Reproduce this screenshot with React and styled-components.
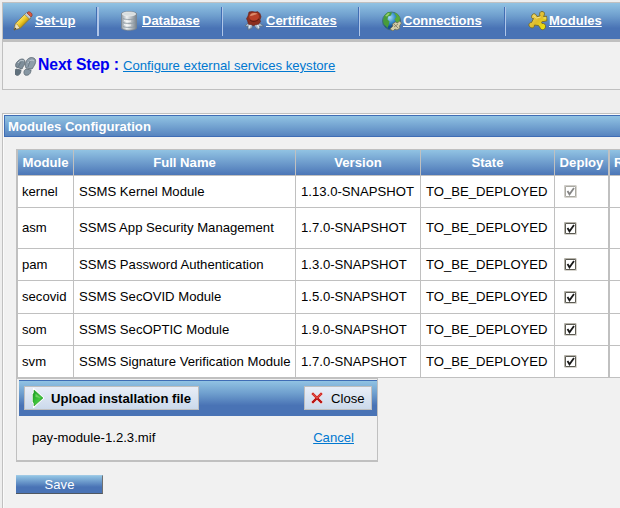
import React from "react";
import styled, { createGlobalStyle, css } from "styled-components";

const GlobalStyle = createGlobalStyle`
  * { box-sizing: border-box; }
  html, body { margin: 0; overflow: hidden; }
  body {
    background: #eeeeee;
    font-family: "Liberation Sans", Arial, sans-serif;
    font-size: 13.13px;
    line-height: 16px;
    color: #000;
  }
`;

const barGradient = "linear-gradient(#91c3e3 0%, #6f9fce 35%, #4973b5 70%, #4973b5 100%)";
const headGradient = "linear-gradient(#91c3e3, #4973b5)";

const Page = styled.div`
  width: 624px;
  height: 508px;
  padding: 2px 0 0 2px;
  overflow: hidden;
`;

const Nav = styled.nav`
  display: flex;
  height: 40px;
  border: solid #c0c0c0;
  border-width: 1px 0 3px 1px;
  background: ${barGradient};
  padding-top: 4px;
`;

const NavItem = styled.div`
  display: flex;
  flex: none;
  width: ${(p) => p.$width}px;
  height: 29px;
  padding-left: ${(p) => p.$indent}px;
  border-right: ${(p) => (p.$last ? "0" : `${p.$rule}px solid #b0c6e8`)};
  box-shadow: ${(p) => (p.$last ? "none" : "inset -1px 0 #416eb4")};
`;

const NavIcon = styled.svg`
  flex: none;
  width: 20px;
  height: 20px;
  margin-top: 4px;
`;

const NavLink = styled.a`
  margin: 6px 0 0 ${(p) => p.$gap}px;
  color: #fff;
  font-size: 13px;
  font-weight: bold;
  text-decoration: underline;
  white-space: nowrap;
`;

const NextStep = styled.section`
  display: flex;
  height: 48px;
  padding: 15px 0 0 12px;
  border: solid #c0c0c0;
  border-width: 0 0 1px 1px;
  background: #f1f1f1;
`;

const StepsIcon = styled.svg`
  width: 22px;
  height: 20px;
  margin-right: 1px;
`;

const StepLabel = styled.span`
  width: 85px;
  margin-top: -1px;
  color: #0000f0;
  font-size: 15.75px;
  letter-spacing: -0.12px;
  line-height: 18px;
  font-weight: bold;
  white-space: nowrap;
`;

const Link = styled.a`
  color: #0078d0;
  text-decoration: underline;
  white-space: nowrap;
`;

const StepLink = styled(Link)`
  padding-top: 1px;
`;

const Config = styled.section`
  height: 400px;
  margin-top: 23px;
  padding: 1px 0 0 1px;
  border: solid #c0c0c0;
  border-width: 1px 0 0 1px;
  background: #f1f1f1;
  box-shadow: inset 1px 1px #fafafa;
`;

const ConfigTitle = styled.h2`
  height: 22px;
  margin: 0;
  padding-left: 3px;
  border: 1px solid #3f6db5;
  background: linear-gradient(#91c3e3, #5784bf);
  color: #fff;
  font-size: 13.13px;
  line-height: 22px;
`;

const Body = styled.div`
  padding: 12px 0 0 12px;
`;

const Table = styled.div`
  width: 720px;
  border: solid #c0c0c0;
  border-width: 1px 0 0 2px;
`;

const Row = styled.div`
  display: grid;
  grid-template-columns: 56px 222px 125px 134px 55px 1fr;
  height: ${(p) => p.$height}px;
  background: ${(p) => (p.$head ? headGradient : "#fff")};
`;

const Cell = styled.div`
  display: flex;
  align-items: center;
  justify-content: ${(p) => (p.$head ? "center" : "flex-start")};
  padding-left: ${(p) => p.$pad ?? 5}px;
  border: solid #c0c0c0;
  border-width: 0 ${(p) => p.$rule ?? 1}px 1px 0;
  white-space: nowrap;
  ${(p) =>
    p.$head &&
    css`
      padding-left: 0;
      color: #fff;
      font-weight: bold;
    `}
`;

const LastCell = styled(Cell)`
  justify-content: flex-start;
  padding-left: 4px;
  border-right: 0;
`;

const CheckBox = styled.svg`
  width: 13px;
  height: 13px;
  margin-left: 4px;
`;

const Upload = styled.section`
  width: 362px;
  height: 84px;
  padding: 1px 0 0 2px;
  border: solid #c0c0c0;
  border-width: 1px 1px 2px 1px;
`;

const UploadBar = styled.div`
  display: flex;
  justify-content: space-between;
  height: 36px;
  padding: 5px 5px 0;
  border-top: 1px solid #3f6db5;
  background: ${barGradient};
`;

const BarButton = styled.button`
  display: flex;
  align-items: center;
  width: ${(p) => p.$width}px;
  height: 24px;
  padding: 0 0 0 ${(p) => p.$indent}px;
  border: 1px solid #bebebe;
  background: linear-gradient(#e9eef7, #cbd9eb);
  color: #000;
  font: ${(p) => (p.$strong ? "bold" : "normal")} 13.13px "Liberation Sans", Arial, sans-serif;
  white-space: nowrap;
  svg { flex: none; margin-right: ${(p) => p.$gap}px; }
`;

const FileRow = styled.div`
  display: flex;
  justify-content: space-between;
  padding: 14px 23px 0 13px;
`;

const SaveButton = styled.button`
  display: block;
  width: 87px;
  height: 19px;
  margin-top: 13px;
  padding: 0 0 0 1px;
  border: solid;
  border-width: 1px 1px 1px 0;
  border-color: #9fc9e5 #707070 #505860 #9fc9e5;
  background: linear-gradient(#91c3e3, #4973b5 65%);
  color: #fff;
  font: 13px/16px "Liberation Sans", Arial, sans-serif;
  letter-spacing: 0.15px;
`;

const Pencil = () => (
  <NavIcon viewBox="0 0 20 20">
    <defs>
      <linearGradient id="pencilBody" x1="0" y1="0" x2="1" y2="1">
        <stop offset=".25" stopColor="#fff29a" />
        <stop offset=".5" stopColor="#ecc823" />
        <stop offset=".75" stopColor="#946c0b" />
      </linearGradient>
    </defs>
    <path d="M1 19 2.5 12.5 12.5 2.5 17.5 7 7.5 17Z" fill="url(#pencilBody)" stroke="#8b7426" strokeWidth=".7" />
    <path d="M1 19 2.5 12.5 4.5 13.5 6 16 7 17Z" fill="#efe2b9" stroke="#715a25" strokeWidth=".4" />
    <path d="M1 19 2 16.5 3.5 18Z" fill="#333" />
    <path d="m11.5 3.5 2-2 5 4-2 2.500Z" fill="#c3cbd0" stroke="#596670" strokeWidth=".5" />
    <path d="m14 2 1-1c1-1 5 1 4 4l-1 1Z" fill="#d95a41" stroke="#833422" strokeWidth=".6" />
  </NavIcon>
);

const Cylinder = () => (
  <NavIcon viewBox="0 0 20 20">
    <defs>
      <linearGradient id="cylinder">
        <stop stopColor="#929ca5" />
        <stop offset=".35" stopColor="#eef1f2" />
        <stop offset="1" stopColor="#78838d" />
      </linearGradient>
    </defs>
    <path d="M1.500 2.500C2 0 16 0 16.500 2.500v14.500c0 3-15 3-15 0Z" fill="url(#cylinder)" stroke="#7d858b" strokeWidth=".8" />
    <ellipse cx="9" cy="3" rx="6.8" ry="2" fill="#d8dedf" stroke="#f3f5f5" strokeWidth=".5" />
    <path d="M3 7.500c2 1.300 10 1.300 12 0M3 11.500c2 1.300 10 1.300 12 0M3 15.500c2 1.300 10 1.300 12 0" fill="none" stroke="#8c989f" strokeWidth=".8" />
    <path d="M4 9.500c2 1 6 1 7 .5M4 13.500c2 1 6 1 7 .5" fill="none" stroke="#fff" strokeWidth=".8" />
  </NavIcon>
);

const Seal = () => (
  <NavIcon viewBox="0 0 20 20">
    <path d="m5 11-4 4 3 .5L4 19l4-2 1-4 3 4 3 2 .5-3.5 4-.5-5-4Z" fill="#a4b9ce" stroke="#596b7d" strokeWidth=".7" />
    <path d="m7 12-2 5m8-4 2 4" stroke="#e4edf4" strokeWidth="1.2" />
    <path d="m5 1 3-.5 3 .5 3-.3 2 2 1 3-1 3 .5 2-2 2.500-3 .5-2 1-2-1-3-.5-1-3.500-1-2L4 5Z" fill="#8b2f1f" stroke="#651f17" strokeWidth=".6" />
    <ellipse cx="10" cy="5.6" rx="5" ry="4" fill="#b94129" />
    <path d="M6 5c0-3 5-4 8-2-3 0-4 2-8 2Z" fill="#dc8c6b" />
    <path d="M6 9c2 2 6 2 9-1" fill="none" stroke="#601b13" />
  </NavIcon>
);

const Globe = () => (
  <NavIcon viewBox="0 0 20 20">
    <defs>
      <radialGradient id="ocean" cx=".4" cy=".3">
        <stop stopColor="#acdcf5" />
        <stop offset=".65" stopColor="#3089c9" />
        <stop offset="1" stopColor="#17508d" />
      </radialGradient>
    </defs>
    <circle cx="9.5" cy="10" r="9" fill="url(#ocean)" stroke="#3f6b70" strokeWidth=".8" />
    <path d="m2 5 4-4 4 .5-1 3-3 1-.5 3 2 2-1 4-1 2.500-4-4L1 9Z" fill="#479b39" />
    <path d="m12 2 3 .5 3 4-.5 6-3-1-2-3 2-3Z" fill="#57a83b" />
    <path d="m3 5 3-3 2 .5-3 3Z" fill="#96cf69" />
    <path d="m8 18 3-3-.5-2 3-2 2 1 2-2 2 2-2 3 .5 2-3 2-2-1-2 2Z" fill="#d2cda9" stroke="#6d694f" strokeWidth=".7" />
    <path d="m12 13 4 4m-4-1 4-3" stroke="#7d795e" strokeWidth=".8" />
  </NavIcon>
);

const Puzzle = () => (
  <NavIcon viewBox="0 0 20 20">
    <defs>
      <linearGradient id="puzzle" x1="0" y1="0" x2="1" y2="1">
        <stop stopColor="#f2dc76" />
        <stop offset=".5" stopColor="#dfbd2b" />
        <stop offset="1" stopColor="#eeee00" />
      </linearGradient>
    </defs>
    <path d="M4 4C6 1.500 8 3 9 5.500L12 5C11 2 12 .5 14 .5c3 0 3 3 1.500 5l3-.3.5 4.500-3 .8c-2-.3-3 .5-2 2 2-.5 4 1 3.500 3.500-.5 3-4 3.500-5 1.500l-2-3-4-.5c0 3-3 4-5 1.500-1.500-2 0-4 2-4l2-4C3.500 8 3 6 4 4Z" fill="url(#puzzle)" stroke="#756927" strokeWidth=".9" />
    <path d="m5.500 4.500 3 2.500 4-1m3 1h3" fill="none" stroke="#f5e58e" strokeWidth=".9" />
  </NavIcon>
);

const Footprints = () => (
  <StepsIcon viewBox="0 0 22 20">
    <g stroke="#5c6872" strokeWidth=".8">
      <path d="M2 5C5 1 10 1 10 5c0 3-2 4-3 7L1 10C0 8 1 6 2 5Z" fill="#7e8e9a" />
      <path d="m1 12 5 1c0 5-4 7-6 4-.5-2 0-4 1-5Z" fill="#60717d" />
      <path d="M11 5c1-4 6-6 9-3 2 3-1 7-3 10l-6-1c-1-2-1-4 0-6Z" fill="#8f9eaa" />
      <path d="m11 12 5 1c0 4-3 6-6 5-2-2-1-5 1-6Z" fill="#8797a3" />
    </g>
    <path d="M3 6c2-3 4-3 6-2M13 6c1-2 4-4 6-2" fill="none" stroke="#c5cfd5" />
    <path d="m6 5-3 5m12-6-2 6" stroke="#65737d" strokeWidth=".8" />
  </StepsIcon>
);

const Check = ({ disabled }) => (
  <CheckBox viewBox="0 0 13 13" role="checkbox" aria-checked="true" aria-disabled={disabled}>
    <path d="M.5 12V.5H12" fill="none" stroke={disabled ? "#cfcdc8" : "#b5b2a9"} />
    <path d="M1.5 1.5h10v10h-10Z" fill="#fff" stroke={disabled ? "#aaa9a2" : "#5c5b53"} />
    <path d="M.5 12.5h12V.5" fill="none" stroke="#d7d5cf" />
    <path d="m3.5 6 2 3.3L10 3" fill="none" stroke={disabled ? "#858585" : "#181818"} strokeWidth="1.8" />
  </CheckBox>
);

const UploadArrow = () => (
  <svg width="14" height="20" viewBox="0 0 14 20">
    <defs>
      <linearGradient id="arrow" x1="0" y1="0" x2="1" y2="1">
        <stop stopColor="#169c23" />
        <stop offset=".6" stopColor="#43c83e" />
        <stop offset="1" stopColor="#087c16" />
      </linearGradient>
    </defs>
    <path d="M3 1.5 12 10 3 18.5V15l-1-1V6l1-1Z" fill="url(#arrow)" stroke="#fff" strokeWidth="2" />
    <path d="M3 2v3L2 6v8l1 1v3l9-8Z" fill="url(#arrow)" stroke="#2c9d2c" strokeWidth=".6" />
    <path d="m4.500 5.500 5 4.500-5-1Z" fill="#70d264" />
  </svg>
);

const CloseCross = () => (
  <svg width="14" height="14" viewBox="0 0 14 14">
    <path d="m1 3 2-2 4 4 4-4 2 2-4 4 4 4-2 2-4-4-4 4-2-2 4-4Z" fill="#b91818" stroke="#f4d5d6" strokeWidth=".7" />
    <path d="m2 3 1-1 4 4 4-4 1 1-5 5Z" fill="#e34a43" />
  </svg>
);

const navItems = [
  { label: "Set-up", Icon: Pencil, width: 96, indent: 10, gap: 2, rule: 2 },
  { label: "Database", Icon: Cylinder, width: 124, indent: 21, gap: 2, rule: 1 },
  { label: "Certificates", Icon: Seal, width: 137, indent: 21, gap: 2, rule: 1 },
  { label: "Connections", Icon: Globe, width: 146, indent: 22, gap: 1, rule: 1 },
  { label: "Modules", Icon: Puzzle, width: 114, indent: 22, gap: 1, rule: 0 },
];

const modules = [
  ["kernel", "SSMS Kernel Module", "1.13.0-SNAPSHOT", 32],
  ["asm", "SSMS App Security Management", "1.7.0-SNAPSHOT", 41],
  ["pam", "SSMS Password Authentication", "1.3.0-SNAPSHOT", 32],
  ["secovid", "SSMS SecOVID Module", "1.5.0-SNAPSHOT", 33],
  ["som", "SSMS SecOPTIC Module", "1.9.0-SNAPSHOT", 32],
  ["svm", "SSMS Signature Verification Module", "1.7.0-SNAPSHOT", 32],
];

export default function App() {
  return (
    <Page>
      <GlobalStyle />
      <Nav>
        {navItems.map(({ label, Icon, width, indent, gap, rule }, i) => (
          <NavItem key={label} $width={width} $indent={indent} $rule={rule} $last={i === navItems.length - 1}>
            <Icon />
            <NavLink $gap={gap}>{label}</NavLink>
          </NavItem>
        ))}
      </Nav>
      <NextStep>
        <Footprints />
        <StepLabel>Next Step :</StepLabel>
        <StepLink>Configure external services keystore</StepLink>
      </NextStep>
      <Config>
        <ConfigTitle>Modules Configuration</ConfigTitle>
        <Body>
          <Table>
            <Row $head $height={26}>
              <Cell $head>Module</Cell>
              <Cell $head>Full Name</Cell>
              <Cell $head>Version</Cell>
              <Cell $head>State</Cell>
              <Cell $head $rule={2}>Deploy</Cell>
              <LastCell $head>R</LastCell>
            </Row>
            {modules.map(([id, name, version, height], i) => (
              <Row key={id} $height={height}>
                <Cell $pad={4}>{id}</Cell>
                <Cell>{name}</Cell>
                <Cell>{version}</Cell>
                <Cell>TO_BE_DEPLOYED</Cell>
                <Cell $rule={2}><Check disabled={i === 0} /></Cell>
                <LastCell />
              </Row>
            ))}
          </Table>
          <Upload>
            <UploadBar>
              <BarButton $width={175} $indent={6} $gap={6} $strong><UploadArrow />Upload installation file</BarButton>
              <BarButton $width={68} $indent={5} $gap={7}><CloseCross />Close</BarButton>
            </UploadBar>
            <FileRow>
              <span>pay-module-1.2.3.mif</span>
              <Link>Cancel</Link>
            </FileRow>
          </Upload>
          <SaveButton>Save</SaveButton>
        </Body>
      </Config>
    </Page>
  );
}
